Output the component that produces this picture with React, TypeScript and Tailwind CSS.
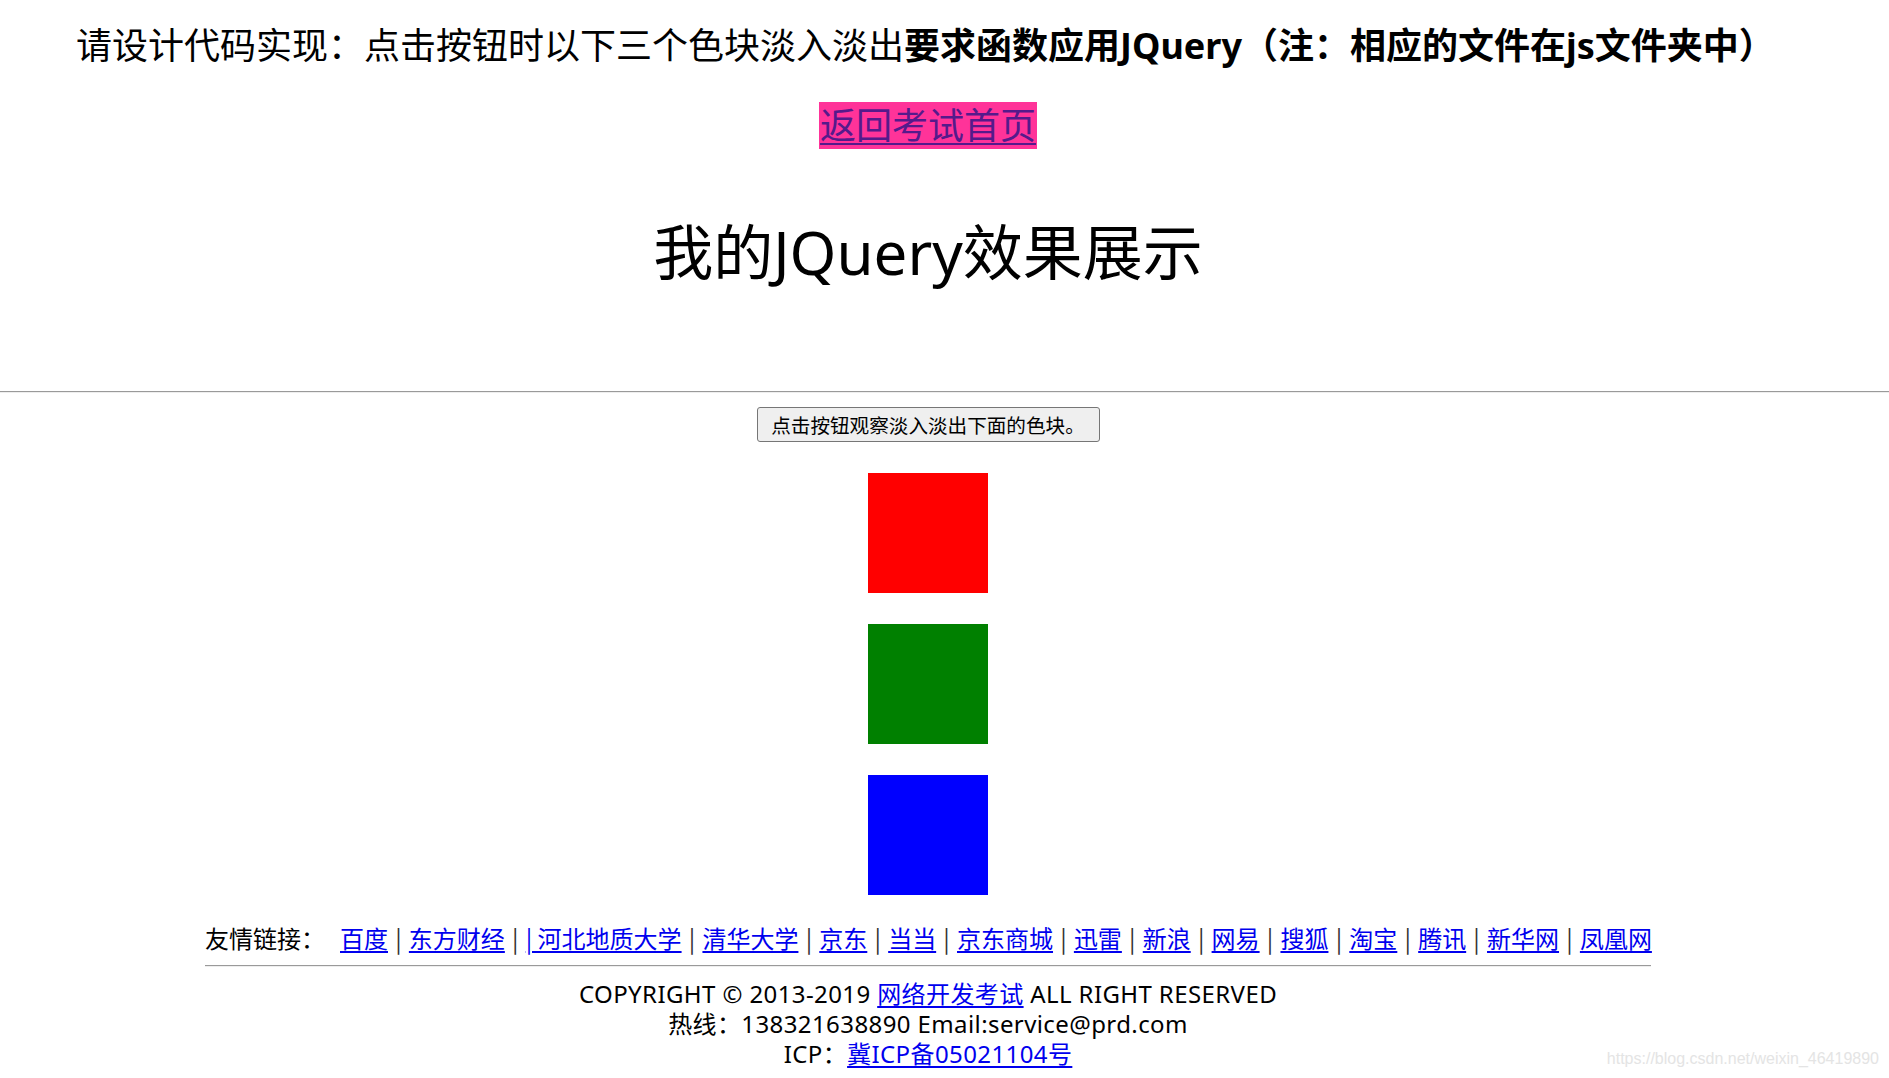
import React from "react";

const links = [
  "百度",
  "东方财经",
  "| 河北地质大学",
  "清华大学",
  "京东",
  "当当",
  "京东商城",
  "迅雷",
  "新浪",
  "网易",
  "搜狐",
  "淘宝",
  "腾讯",
  "新华网",
  "凤凰网",
];

export default function App() {
  return (
    <div
      className="relative min-h-[1078px] w-full bg-white text-black overflow-hidden"
      style={{ fontFamily: '"Noto Sans", "Noto Sans CJK SC", sans-serif' }}
    >
      <div className="w-[1856px] flex flex-col items-center">
        {/* Task heading */}
        <div className="self-start pl-[76px] pt-[23px] h-[69px] text-[36px] leading-[46px] whitespace-nowrap">
          请设计代码实现：点击按钮时以下三个色块淡入淡出
          <span className="font-bold">要求函数应用JQuery（注：相应的文件在js文件夹中）</span>
        </div>

        {/* Back link */}
        <a
          href="#"
          className="mt-[33px] inline-block h-[47px] leading-[47px] px-[1px] bg-[#ff3399] text-[#551a8b] text-[36px] underline decoration-[2px] underline-offset-[4px] whitespace-nowrap"
        >
          返回考试首页
        </a>

        {/* Title */}
        <h1 className="mt-[68px] h-[70px] leading-[70px] text-[60px] font-normal whitespace-nowrap">
          我的JQuery效果展示
        </h1>
      </div>

      {/* Horizontal rule */}
      <div className="mt-[104px] w-full border-t border-b border-t-[#9a9a9a] border-b-[#eeeeee]" />

      <div className="w-[1856px] flex flex-col items-center">
        <button
          className="mt-[14px] h-[35px] w-[343px] bg-[#efefef] border border-[#767676] rounded-[3px] text-[19.6px] leading-[33px] text-black whitespace-nowrap"
          style={{ fontFamily: '"Noto Sans CJK SC", sans-serif' }}
        >
          点击按钮观察淡入淡出下面的色块。
        </button>

        <div className="mt-[31px] flex flex-col gap-[31px]">
          <div className="w-[120px] h-[120px] bg-[#ff0000]" />
          <div className="w-[120px] h-[120px] bg-[#008000]" />
          <div className="w-[120px] h-[120px] bg-[#0000ff]" />
        </div>

        {/* Friendly links */}
        <div className="mt-[28px] w-[1446px]">
          <div
            className="h-[30px] leading-[30px] text-[24px] whitespace-nowrap flex items-center"
            style={{ fontFamily: '"Noto Sans CJK SC", sans-serif' }}
          >
            <span>友情链接：</span>
            <span className="w-[15px] shrink-0" />
            {links.map((l, i) => (
              <React.Fragment key={l}>
                {i > 0 && <span className="mx-[7.2px] text-[#333]">|</span>}
                <a href="#" className="text-[#0000ee] underline underline-offset-[3px]">
                  {l}
                </a>
              </React.Fragment>
            ))}
          </div>
          <div className="mt-[12px] border-t border-b border-t-[#9a9a9a] border-b-[#eeeeee]" />
        </div>

        {/* Footer */}
        <div className="mt-[12px] flex flex-col items-center text-[24px] leading-[30px] tracking-[0.4px] whitespace-nowrap">
          <div className="h-[30px]">
            COPYRIGHT © 2013-2019{" "}
            <a href="#" className="text-[#0000ee] underline underline-offset-[3px]">
              网络开发考试
            </a>{" "}
            ALL RIGHT RESERVED
          </div>
          <div className="h-[30px]">热线：138321638890 Email:service@prd.com</div>
          <div className="h-[30px]">
            ICP：
            <a href="#" className="text-[#0000ee] underline underline-offset-[3px]">
              冀ICP备05021104号
            </a>
          </div>
        </div>
      </div>

      {/* Watermark */}
      <div
        className="absolute right-[10px] bottom-[9px] text-[16px] leading-[20px] text-[#e4e4e4]"
        style={{ fontFamily: '"Liberation Sans", Arial, sans-serif' }}
      >
        https://blog.csdn.net/weixin_46419890
      </div>
    </div>
  );
}
